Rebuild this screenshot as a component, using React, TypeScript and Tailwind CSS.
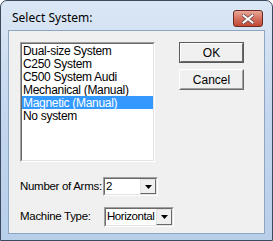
import React from "react";

const items = [
  "Dual-size System",
  "C250 System",
  "C500 System Audi",
  "Mechanical (Manual)",
  "Magnetic (Manual)",
  "No system",
];

function Sunken({ className, children }: { className: string; children?: React.ReactNode }) {
  return (
    <div className={"shrink-0 border border-t-[#a0a0a0] border-l-[#a0a0a0] border-b-white border-r-white " + className}>
      <div className="w-full h-full border border-t-[#696969] border-l-[#696969] border-b-[#e3e3e3] border-r-[#e3e3e3] bg-white flex">
        {children}
      </div>
    </div>
  );
}

function Arrow() {
  return (
    <div className="shrink-0 w-[16px] h-full border border-t-[#e3e3e3] border-l-[#e3e3e3] border-b-[#696969] border-r-[#696969] bg-[#f0f0f0] flex items-center justify-center">
      <svg width="7" height="4" viewBox="0 0 7 4">
        <path d="M0 0H7L3.5 4Z" fill="#000" />
      </svg>
    </div>
  );
}

function Combo({ value, w, h }: { value: string; w: string; h: string }) {
  return (
    <Sunken className={w + " " + h}>
      <div className="flex-1 min-w-0 flex items-center pl-[1px] text-[11.5px] tracking-[-0.45px] text-black whitespace-nowrap overflow-hidden">{value}</div>
      <Arrow />
    </Sunken>
  );
}

function Button({ label, def }: { label: string; def?: boolean }) {
  return (
    <div className={"w-[65px] h-[21px] border " + (def ? "border-[#5a5a5a]" : "border-t-white border-l-white border-b-[#696969] border-r-[#696969]")}>
      <div className={"w-full h-full border flex items-center justify-center bg-[#f0f0f0] text-[12px] text-black " + (def ? "border-t-white border-l-white border-b-[#696969] border-r-[#696969]" : "border-t-[#f0f0f0] border-l-[#f0f0f0] border-b-[#a0a0a0] border-r-[#a0a0a0]")}>
        {label}
      </div>
    </div>
  );
}

export default function App() {
  return (
    <div
      className="w-[273px] h-[241px] rounded-t-[7px] border border-[#3b4a5e] bg-gradient-to-b from-[#dbe7f5] via-[#c2d6ee] to-[#b8cfea] flex flex-col overflow-hidden"
      style={{ fontFamily: '"Liberation Sans", Arial, sans-serif' }}
    >
      <div className="h-[29px] flex items-start">
        <div className="pl-[11px] pt-[8px] text-[12px] text-black" style={{ fontFamily: '"Noto Sans", "Open Sans", sans-serif' }}>
          Select System:
        </div>
        <div className="ml-auto mr-[9px] mt-[9px] w-[30px] h-[17px] rounded-[3px] border border-[#6e2a20] bg-gradient-to-b from-[#e9a99a] via-[#d4705f] to-[#c04a36] flex items-center justify-center">
          <svg width="12" height="10" viewBox="0 0 12 10">
            <path d="M1.5 1.5L10.5 8.5M10.5 1.5L1.5 8.5" stroke="#5a3b3b" strokeWidth="3.4" strokeLinecap="square" />
            <path d="M1.5 1.5L10.5 8.5M10.5 1.5L1.5 8.5" stroke="#fff" strokeWidth="2" strokeLinecap="square" />
          </svg>
        </div>
      </div>
      <div className="mx-[7px] h-[204px] border border-[#8fa6c2] bg-[#f0f0f0] flex flex-col pl-[11px] pt-[11px] text-[12px] text-black">
        <div className="flex items-start">
          <Sunken className="w-[135px] h-[120px]">
            <div className="flex flex-col w-full">
              {items.map((it, i) => (
                <div
                  key={it}
                  className={"h-[13px] leading-[14px] pl-[1px] text-[12px] whitespace-nowrap tracking-[-0.3px] " + (i === 4 ? "bg-[#3399ff] text-white" : "text-black")}
                >
                  {it}
                </div>
              ))}
            </div>
          </Sunken>
          <div className="ml-[24px] flex flex-col gap-[6px]">
            <Button label="OK" def />
            <Button label="Cancel" />
          </div>
        </div>
        <div className="mt-[15px] flex items-center h-[19px]">
          <div className="shrink-0 w-[83px] whitespace-nowrap text-[11.5px] tracking-[-0.3px]">Number of Arms:</div>
          <Combo value="2" w="w-[55px]" h="h-[19px]" />
        </div>
        <div className="mt-[11px] flex items-center h-[20px]">
          <div className="shrink-0 w-[84px] whitespace-nowrap text-[11.5px] tracking-[-0.3px]">Machine Type:</div>
          <Combo value="Horizontal" w="w-[70px]" h="h-[20px]" />
        </div>
      </div>
    </div>
  );
}
